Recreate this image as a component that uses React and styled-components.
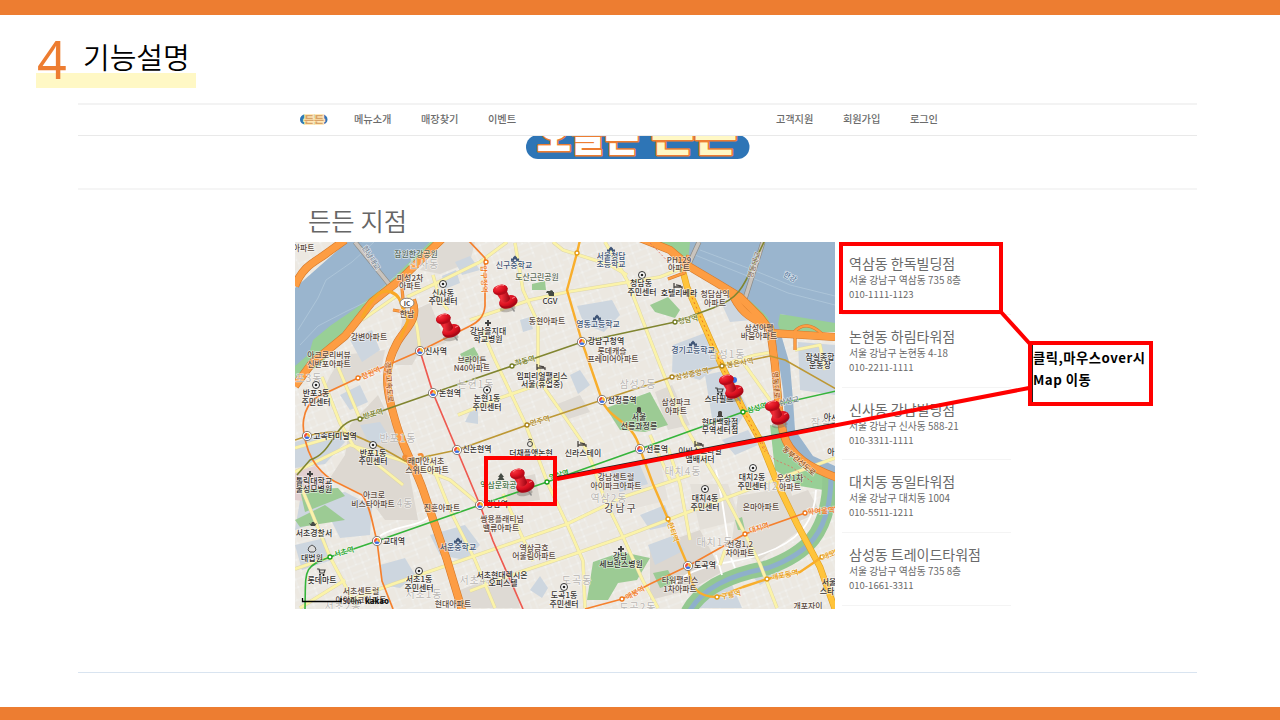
import React from "react";
import styled, { createGlobalStyle, css } from "styled-components";

const Global = createGlobalStyle`
  *, *::before, *::after { box-sizing: border-box; }
  body { margin: 0; background: #fff; }
`;

const kr = `"Noto Sans CJK KR", "Noto Sans", sans-serif`;

const Slide = styled.div`
  position: relative;
  width: 1280px;
  height: 720px;
  overflow: hidden;
  display: flex;
  flex-direction: column;
  background: #fff;
  font-family: ${kr};
`;

const Bar = styled.div`
  flex: none;
  height: ${(p) => p.$h}px;
  background: #ed7d31;
`;

const Header = styled.header`
  flex: none;
  height: 88px;
  padding: 19px 0 0 36px;
`;

const Heading = styled.h1`
  display: flex;
  width: 160px;
  height: 54px;
  margin: 0;
  font-weight: 400;
  background: linear-gradient(#fff8c5, #fff8c5) bottom / 100% 15px no-repeat;
`;

const Num = styled.span`
  width: 47px;
  padding-left: 1px;
  font: 400 52px/49px "Noto Sans", sans-serif;
  color: #ed7d31;
`;

const HeadingText = styled.span`
  font-size: 29px;
  line-height: 45px;
  font-weight: 350;
  color: #000;
  white-space: nowrap;
`;

const Site = styled.main`
  flex: 1;
  display: flex;
  flex-direction: column;
  margin: 0 83px 34px 78px;
  border-top: 2px solid #f3f3f3;
  border-bottom: 1px solid #d9e4f0;
`;

const Nav = styled.nav`
  flex: none;
  display: flex;
  align-items: center;
  height: 31px;
  padding: 0 259px 2px 222px;
  border-bottom: 1px solid #e9e9e9;
`;

const NavGroup = styled.div`
  display: flex;
  align-items: center;
  gap: 29.5px;
  margin-left: ${(p) => p.$left || 0};
`;

const NavItem = styled.a`
  font-size: 10.2px;
  line-height: 16px;
  font-weight: 500;
  color: #6b6b6b;
  white-space: nowrap;
`;

const Banner = styled.div`
  flex: none;
  height: 54px;
  padding-left: 448px;
  border-bottom: 2px solid #f5f5f5;
  svg { display: block; }
`;

const Content = styled.section`
  padding: 15px 0 0 217px;
`;

const Title = styled.h2`
  margin: 0;
  padding-left: 13px;
  height: 37px;
  font-size: 25.4px;
  line-height: 31px;
  font-weight: 350;
  color: #666;
`;

const Columns = styled.div`
  display: flex;
  gap: 7px;
`;

const MapSvg = styled.svg`
  flex: none;
  display: block;
  width: 540px;
  height: 367px;
  text {
    font-family: ${kr};
    paint-order: stroke;
    stroke-linejoin: round;
  }
`;

const List = styled.ul`
  width: 169px;
  margin: 0;
  padding: 0;
  list-style: none;
`;

const Branch = styled.li`
  height: 72.8px;
  padding: 11px 0 0 7px;
  border-bottom: 1px solid #f4f4f4;
  color: #686868;
  white-space: nowrap;
`;

const BranchName = styled.div`
  font-size: 14px;
  line-height: 20px;
  font-weight: 400;
  color: #6a6a6a;
`;

const small = css`
  font-size: 9.8px;
  line-height: 14px;
  font-weight: 400;
`;
const Address = styled.div`
  ${small}
  letter-spacing: .03px;
`;
const Phone = styled.div`
  ${small}
  font-size: 9.5px;
`;

const Marks = styled.svg`
  position: absolute;
  left: 0;
  top: 0;
`;

const Callout = styled.div`
  position: absolute;
  left: 1028px;
  top: 341px;
  width: 125px;
  height: 65px;
  padding: 2px 0 0 1px;
  border: 4px solid #ff0000;
  background: #fff;
  box-shadow: inset 1px 0 0 #222;
  font-size: 13.3px;
  line-height: 22px;
  font-weight: 700;
  letter-spacing: .5px;
  color: #000;
  white-space: nowrap;
`;

const branches = [
  ["역삼동 한독빌딩점", "서울 강남구 역삼동 735 8층", "010-1111-1123"],
  ["논현동 하림타워점", "서울 강남구 논현동 4-18", "010-2211-1111"],
  ["신사동 강남빌딩점", "서울 강남구 신사동 588-21", "010-3311-1111"],
  ["대치동 동일타워점", "서울 강남구 대치동 1004", "010-5511-1211"],
  ["삼성동 트레이드타워점", "서울 강남구 역삼동 735 8층", "010-1661-3311"],
];

/* Map data: all coordinates share the slide's pixel space. */
const DARK = "#35322f", BROWN = "#5c4a3e", NAVY = "#3f5577", FAINT = "#b9b6b3";
const OLIVE = "#737b22", GOLD = "#a98219", GREEN = "#17a01c", ORANGE = "#f07618", AMBER = "#e59a12";

const labels = [
  ["하아파트", 300, 248, BROWN], ["잠원한강공원", 416, 254, "#5b6b59"],
  ["미성2차", 410, 278, BROWN], ["아파트", 410, 286, BROWN],
  ["신사동", 443, 293, DARK], ["주민센터", 443, 301.5, DARK], ["한남", 407, 314, BROWN],
  ["강변아파트", 369, 337, BROWN], ["아크로리버뷰", 329, 355, BROWN], ["신반포아파트", 329, 364, BROWN],
  ["신사역", 436, 351, DARK], ["브라이튼", 472, 360, BROWN], ["N40아파트", 472, 368.5, BROWN],
  ["신구중학교", 514, 265, NAVY], ["도산근린공원", 537, 277, "#5b6b59"], ["CGV", 550, 301, DARK],
  ["동현아파트", 547, 321, BROWN], ["강남을지대", 488, 331, DARK], ["학교병원", 488, 339, DARK],
  ["영동고등학교", 598, 324, NAVY], ["강남구청역", 606, 341, DARK],
  ["롯데캐슬", 612, 351, BROWN], ["프레미어아파트", 613, 359.5, BROWN],
  ["서울청담", 611, 256, NAVY], ["초등학교", 611, 264, NAVY],
  ["청담동", 641, 283, DARK], ["주민센터", 642, 292, DARK],
  ["PH129", 679, 260, BROWN], ["아파트", 679, 268, BROWN], ["호텔리베라", 679, 293, DARK],
  ["청담삼익", 715, 294, BROWN], ["아파트", 715, 303, BROWN],
  ["삼성아펠", 759, 328, BROWN], ["바움아파트", 759, 336, BROWN], ["경기고등학교", 693, 350, NAVY],
  ["잠실종합", 820, 357, DARK], ["운동장", 820, 365.5, DARK],
  ["반포3동", 316, 393, DARK], ["주민센터", 316, 402, DARK], ["논현역", 450, 393, DARK],
  ["고속터미널역", 335, 436, DARK], ["반포1동", 373, 453, DARK], ["주민센터", 373, 461, DARK],
  ["래미안서초", 426, 461, BROWN], ["스위트아파트", 427, 470, BROWN],
  ["톨릭대학교", 314, 481, DARK], ["울성모병원", 314, 489, DARK], ["신논현역", 477, 449, DARK],
  ["임피리얼팰리스", 542, 376, DARK], ["서울(휴업중)", 542, 384.5, DARK],
  ["논현1동", 487, 398, DARK], ["주민센터", 487, 407, DARK],
  ["더채플앳논현", 531, 453, DARK], ["신라스테이", 583, 453, DARK], ["선정릉역", 622, 400, DARK],
  ["서울", 639, 417.5, DARK], ["선릉과정릉", 639, 426, DARK], ["선릉역", 657, 449, DARK],
  ["역삼문화공원", 502, 485, "#48764a"], ["강남센트럴", 616, 477, BROWN], ["아이파크아파트", 616, 486, BROWN],
  ["스타필드", 719, 399, DARK], ["삼성파크", 676, 402, BROWN], ["아파트", 676, 411, BROWN],
  ["현대백화점", 720, 422, DARK], ["무역센터점", 720, 430.5, DARK],
  ["이비스스타일", 700, 451, DARK], ["앰배서더", 700, 459.5, DARK],
  ["대치2동", 752, 477, DARK], ["주민센터", 752, 486, DARK],
  ["우성1차", 790, 478, BROWN], ["아파트", 790, 487, BROWN], ["아시", 831, 417, DARK], ["아", 831, 452, DARK],
  ["아크로", 374, 495.5, BROWN], ["비스타아파트", 373, 504, BROWN], ["진흥아파트", 442, 508, BROWN],
  ["서초경찰서", 314, 533, DARK], ["대법원", 312, 558, DARK], ["롯데마트", 322, 580, DARK],
  ["교대역", 394, 541, DARK], ["서운중학교", 458, 547, NAVY],
  ["서초1동", 419, 579.5, DARK], ["주민센터", 419, 588, DARK],
  ["서초센트럴", 361, 591, BROWN], ["아이파크아파트", 361, 600, BROWN], ["현대아파트", 453, 604, BROWN],
  ["쌍용플래티넘", 502, 519.5, BROWN], ["밸류아파트", 501, 528, BROWN], ["강남역", 497, 504, DARK],
  ["역삼금호", 534, 548, BROWN], ["어울림아파트", 534, 556.5, BROWN],
  ["서초현대렉시온", 502, 575, DARK], ["오피스텔", 503, 583.5, DARK],
  ["강남", 620, 556, DARK], ["세브란스병원", 621, 564.5, DARK],
  ["도곡1동", 564, 595, DARK], ["주민센터", 564, 604, DARK],
  ["대치4동", 705, 498, DARK], ["주민센터", 705, 507, DARK], ["은마아파트", 761, 507, BROWN],
  ["선경1,2", 740, 544, BROWN], ["차아파트", 740, 553.5, BROWN], ["도곡역", 705, 565, DARK],
  ["타워팰리스", 680, 580, BROWN], ["1차아파트", 680, 589, BROWN],
  ["서울", 829, 582, DARK], ["스타", 827, 591, DARK], ["개포자이", 808, 606, BROWN],
];

const turned = [
  ["압구정역", 484, 279, ORANGE, 88], ["학동역", 525, 361, OLIVE, -15], ["청담역", 688, 320, OLIVE, -10],
  ["봉은사역", 740, 363, GOLD, -10], ["한강", 790, 277, "#5b7da0", 28], ["한남대교", 371, 258, "#7b8796", 58],
  ["영동대교", 754, 265, "#8a7668", -72], ["잠원역", 371, 373, ORANGE, -24], ["반포역", 373, 414, OLIVE, -15],
  ["경부고속도로", 389, 382, "#a3561c", 86], ["언주역", 540, 421, GOLD, -15], ["역삼역", 559, 475, GREEN, -16],
  ["삼성중앙역", 692, 374, GOLD, -12], ["삼성역", 757, 408, GREEN, -14], ["삼성교", 789, 401, "#6d7a80", -12],
  ["서초역", 344, 552, GREEN, -15], ["매봉역", 635, 593, ORANGE, -28], ["대치역", 759, 528, ORANGE, -17],
  ["학여울역", 821, 511, ORANGE, -4], ["한티역", 673, 532, AMBER, 70], ["구룡역", 731, 595, AMBER, -12],
  ["개포동역", 785, 575, AMBER, -12], ["대모", 829, 555, AMBER, -20],
  ["동부간선도로", 799, 461, "#8f4b14", 40], ["영동대로", 776, 385, "#a3561c", 86],
];

const districts = [
  ["신사동", 424, 264], ["삼성1동", 727, 354], ["반포3동", 304, 378], ["반포1동", 398, 438],
  ["논현1동", 476, 384], ["삼성2동", 638, 384], ["잠실동", 826, 422], ["대치4동", 683, 471],
  ["4동", 405, 503], ["역삼2동", 609, 498], ["서초2동", 343, 606], ["서초1동", 424, 594],
  ["서초4동", 478, 580], ["도곡동", 577, 580], ["도곡2동", 638, 607], ["대치1동", 715, 542], ["대치2동", 770, 486],
];

const transfers = [[420,351],[582,342],[433,393],[307,436],[457,450],[602,400],[640,449],[480,505],[377,541],[688,566]];
const stations = [
  [486,262,ORANGE],[577,253,AMBER],[358,378,ORANGE],[360,419,OLIVE],[512,366,OLIVE],[675,322,OLIVE],
  [527,425,GOLD],[672,377,GOLD],[722,366,GOLD],[743,412,GREEN],[547,482,GREEN],[330,557,GREEN],
  [668,519,AMBER],[745,534,ORANGE],[805,513,ORANGE],[717,597,AMBER],[767,579,AMBER],[822,557,AMBER],[622,599,ORANGE],
];
const offices = [[443,284],[642,275],[316,385],[373,445],[487,390],[753,468],[419,571],[564,587],[705,489]];
const schools = [[515,257],[611,248],[597,316],[693,342],[458,539]];
const hospitals = [[488,323],[310,474],[621,549]];
const hotels = [[541,367],[582,444],[678,286],[699,444]];
const carts = [[719,391],[321,572]];
const towers = [[639,410],[720,414]];
const pins = [[448,326],[505,297],[731,387],[777,413],[522,481]];

const land = [
  ["#ded9d2", "M403 315L430 303 446 343 420 351 412 365 395 365Z"],
  ["#dedad4", "M343 355L385 350 382 366 350 382 320 398 330 376Z"],
  ["#ddd8d1", "M378 395L405 450 418 520 385 520 368 497 330 478 345 455 350 425Z"],
  ["#dedad4", "M445 242L475 242 470 262 440 274 420 270Z"],
  ["#e0dcd5", "M738 496L790 487 800 530 760 560 730 555Z"],
  ["#dcd7d0", "M650 548L700 530 722 572 690 590 650 600Z"],
  ["#ddd8d1", "M510 480L535 474 540 500 505 505Z"],
  ["#dedad4", "M655 392L672 385 690 425 668 430Z"],
  ["#dedad4", "M555 405L580 395 590 412 565 420Z"],
  ["#dedad4", "M460 590L512 570 520 608 465 608Z"],
  ["#ded9d2", "M780 500L808 490 820 512 795 523Z"],
  ["#e6e2dc", "M590 470L660 460 668 500 610 515Z"],
  ["#e4e0d9", "M690 484L728 484 740 520 700 530Z"],
];
const facilities = [
  "M577 306L612 300 620 315 604 332 584 324Z", "M520 320L530 317 533 329 523 332Z",
  "M442 276L456 270 460 283 445 289Z", "M455 262L470 256 480 270 462 275Z",
  "M295 442L335 430 345 442 325 464 295 468Z", "M340 395L360 385 368 402 350 410Z",
  "M360 425L380 422 390 438 370 446Z", "M300 500L345 492 372 506 370 535 340 538 330 518 295 530Z",
  "M295 545L325 538 332 560 302 570Z", "M380 565L405 558 415 575 400 588 382 585Z",
  "M430 535L465 525 480 545 465 560 440 555Z", "M673 345L705 333 722 362 700 380 672 372Z",
  "M705 375L728 370 748 408 735 430 712 418Z", "M722 440L748 430 758 445 735 455Z",
  "M798 342L835 345 835 395 800 390Z", "M610 470L640 465 648 484 620 492Z",
  "M640 515L665 505 672 525 650 530Z", "M570 375L580 370 590 385 578 394Z",
  "M470 412L478 410 478 424 465 422Z", "M690 588L730 580 742 608 700 608Z",
  "M648 545L675 535 685 550 655 565Z", "M720 300L740 300 752 320 730 322Z",
  "M540 576L548 588 542 598 530 590Z", "M747 570L765 560 780 572 760 585Z",
  "M350 340L372 330 380 350 362 362Z",
];
const parks = [
  "M606 408L650 392 668 425 645 432 620 430Z", "M532 284L545 281 546 290 532 290Z",
  "M650 305L668 297 680 310 675 318 655 312Z", "M593 562L622 552 650 558 637 580 618 583 608 600 587 600Z",
  "M295 520L325 505 345 520 300 527Z", "M300 490L338 488 345 496 305 512Z",
  "M735 520L742 517 745 530 738 530Z", "M460 354L474 347 480 358 466 364Z",
  "M653 573L668 570 675 583 660 588Z", "M470 350L478 354 470 360Z",
];

const localRoads = [
  "M407 297L443 280 480 262 507 242", "M470 320L530 300 567 292 660 277 690 265", "M412 307L417 327 420 350",
  "M515 243L523 290 538 323 538 365 541 383 560 410 583 443 592 463 605 500 623 537 643 581 658 608",
  "M482 330L495 360 525 423 548 484 567 524 583 561 585 608", "M553 242L563 250 610 265 627 275",
  "M605 242L627 280 660 365 683 423 717 480 745 534 760 564 777 608",
  "M433 275L440 300 448 310", "M295 472L350 445 400 460 450 480 480 505", "M322 377L340 423 353 445 403 485",
  "M338 367L360 419", "M300 484L330 557 357 608", "M295 569L330 557", "M350 600L393 584 480 554 567 524 623 497 690 475",
  "M300 608L345 580", "M470 591L520 572 580 552 623 537 683 514 750 489 835 458", "M503 494L533 561",
  "M362 320L398 295", "M295 448L350 432", "M428 455L450 510 475 560 495 608", "M670 480L650 435",
  "M740 358L770 400", "M722 365L755 355 773 352", "M795 350L820 345 825 370", "M720 565L725 550",
  "M690 540L680 484 668 448", "M458 415L500 398 560 377",
];

const highways = [
  "M295 286C303 265 317 261 327 253L345 240", "M443 238L400 280 372 302 345 336 312 363 295 386",
  "M412 300C420 320 405 328 397 343 384 367 386 386 391 405 402 449 412 460 422 487L447 560 462 610",
  "M640 238L670 250 690 267 717 283 740 297 760 317 772 333 835 337",
  "M731 291C742 318 757 319 770 328L775 365 779 410 783 432C789 457 813 469 838 478",
  "M402 288L404 311 M393 310L410 313", "M668 279L684 273 688 255",
  "M794 332C802 323 812 324 822 334", "M795 332L795 350",
];

const metro = [
  ["#f5802d", 1.7, "M468 240L485 258 485 306C484 317 478 322 470 326L420 351 358 378 317 397C300 409 302 430 306 443 312 468 330 480 340 484L362 495C370 504 373 527 377 541L382 581 393 609"],
  ["#ee5a50", 1.7, "M420 351L433 393 457 450 480 505 493 541 523 609"],
  ["#f8ae2c", 2.4, "M580 240L577 253 567 290 582 342 602 400C609 420 633 420 640 449L653 484 668 519 688 566C691 590 699 597 717 597L743 587 767 579 800 572 822 557 836 550"],
  ["#808530", 1.6, "M297 475L310 460C335 452 333 420 360 419L390 408 433 393 512 366 582 342 675 322 713 308C745 297 745 280 765 240"],
  ["#bd9834", 1.6, "M295 440L307 436C350 425 360 440 373 443L405 461 457 450 527 425 602 400 672 377 722 366 770 356 785 360 836 389"],
  ["#35b43a", 1.6, "M305 609C306 570 302 567 330 557L377 541 480 505 547 482 640 449 743 412 836 391"],
  ["#f5802d", 1.6, "M585 609L622 599 650 584 688 566 745 534 805 513 836 507"],
];

const River = "M347 242L430 242 393 278C368 302 338 320 330 326L313 340 309 354 295 366 295 288Z";
const EastRiver = "M690 242L835 242 835 323 780 314 778 324 790 365 793 400 795 430 813 456 835 466 835 476 805 466 788 446 785 420 783 390 777 350 768 318C755 302 735 290 717 279L688 262Z";

function Pin({ x, y }) {
  return (
    <g transform={`translate(${x} ${y})`}>
      <ellipse cx="1" cy="12" rx="8" ry="3.4" fill="#69605a" opacity=".38" transform="rotate(-8)" />
      <path d="M5 8L9.5 14.5" stroke="#8f8f8f" strokeWidth="1.4" />
      <ellipse cx="3.5" cy="5.3" rx="9.4" ry="6" fill="#a90716" transform="rotate(-18 3.5 5.5)" />
      <ellipse cx="3" cy="3.8" rx="9" ry="5.2" fill="url(#pinRed)" transform="rotate(-18 3 3.8)" />
      <path d="M-9.5 -5L-3.5 4.5C-.5 7 5 4.5 5 1L1-8Z" fill="url(#pinNeck)" />
      <ellipse cx="-4.6" cy="-7" rx="7.5" ry="5" fill="#b50b19" transform="rotate(-14 -4.6 -7)" />
      <ellipse cx="-4.8" cy="-8" rx="7.2" ry="4.2" fill="url(#pinRed)" transform="rotate(-14 -4.8 -8)" />
      <path d="M-9-9C-7-12-3-12.5-1-11.5" stroke="#ff8d90" strokeWidth="1.1" fill="none" opacity=".8" />
      <path d="M7 1.5L10 0" stroke="#ff9a9c" strokeWidth="1.2" opacity=".7" />
    </g>
  );
}

function StoreMap() {
  return (
    <MapSvg viewBox="295 242 540 367" aria-label="지점 지도">
      <defs>
        <pattern id="streets" width="54" height="48" patternUnits="userSpaceOnUse" patternTransform="rotate(-21)">
          <path d="M0 5H54M0 13H22M22 17H54M0 23H36M0 31H54M16 38H54M0 43H30M6 0V23M14 5V48M22 0V31M29 17V48M36 0V31M43 5V17M43 31V48M50 0V38M8 31V43" stroke="#dcd8d2" strokeWidth="1.5" fill="none" opacity=".8" />
          <path d="M0 5H54M0 13H22M22 17H54M0 23H36M0 31H54M16 38H54M0 43H30M6 0V23M14 5V48M22 0V31M29 17V48M36 0V31M43 5V17M43 31V48M50 0V38M8 31V43" stroke="#fbfaf8" strokeWidth=".9" fill="none" />
        </pattern>
        <radialGradient id="pinRed" cx=".35" cy=".3" r=".8">
          <stop offset="0" stopColor="#f4333d" /><stop offset=".6" stopColor="#db1020" /><stop offset="1" stopColor="#b00716" />
        </radialGradient>
        <linearGradient id="pinNeck">
          <stop offset="0" stopColor="#c40d1b" /><stop offset=".4" stopColor="#ef2d38" /><stop offset="1" stopColor="#9c0412" />
        </linearGradient>
      </defs>
      <rect x="295" y="242" width="540" height="367" fill="#ece8e1" />
      <rect x="295" y="242" width="540" height="367" fill="url(#streets)" />
      {land.map(([c, d]) => <path key={d} d={d} fill={c} />)}
      {facilities.map((d) => <path key={d} d={d} fill="#cdd6df" />)}
      <path d="M295 472L315 466 330 482 318 503 295 500Z" fill="#e2cfd0" />
      {parks.map((d) => <path key={d} d={d} fill="#9ccb94" />)}
      <path d="M430 242H442L375 303 320 365 295 380V360L330 315Z" fill="#98cf96" />
      <path d={River} fill="#9ab5ce" />
      <path d="M362 242L374 242 352 262 326 280 318 298 298 330M422 262L393 278 370 300 345 312 318 326 300 345" stroke="#b5cbdd" strokeWidth=".7" fill="none" />
      <path d="M779 314L835 318 835 332 773 333ZM766 300L778 314 776 330 745 300ZM650 242L692 242 688 262 655 246ZM770 425L790 430C797 465 822 466 835 476V492L800 486 775 470Z" fill="#98cf96" />
      <path d={EastRiver} fill="#9ab5ce" />
      <path d="M700 250L748 268 790 285 835 296M695 255L745 275 788 293 835 305" stroke="#b5cbdd" strokeWidth=".7" fill="none" />
      <path d="M830 475C830 535 805 554 767 568 727 575 700 590 688 612" stroke="#93c891" strokeWidth="15" fill="none" />
      <path d="M831 475C831 535 806 554 768 568 728 575 701 590 689 612" stroke="#8eb0cb" strokeWidth="5" fill="none" />
      <path d="M673 585C700 560 735 565 765 553 795 542 815 525 816 490M716 470L722 500 730 555 735 568M380 536C400 522 430 530 435 505M722 575L716 555" stroke="#fff" strokeWidth="1.8" fill="none" />
      {localRoads.map((d) => <path key={d} d={d} stroke="#ddd5ac" strokeWidth="3.6" fill="none" strokeLinejoin="round" />)}
      {localRoads.map((d) => <path key={d} d={d} stroke="#fbf3a9" strokeWidth="2.7" fill="none" strokeLinejoin="round" />)}
      <path d="M355 242L389 284M699 242L688 266M763 242L744 302" stroke="#8c8c88" strokeWidth="5" />
      <path d="M355 242L389 284M699 242L688 266M763 242L744 302" stroke="#c9c3bd" strokeWidth="3.6" />
      <path d="M682 268L687 287 703 323 722 366 745 413 760 440 778 485 797 524 820 567 836 612" stroke="#dfa024" strokeWidth="6.6" fill="none" />
      <path d="M682 268L687 287 703 323 722 366 745 413 760 440 778 485 797 524 820 567 836 612" stroke="#ffc43b" strokeWidth="5.4" fill="none" />
      <path d="M690 293L722 366 745 413 765 452" stroke="#e77924" strokeWidth="1" strokeDasharray="2 3" fill="none" />
      {highways.map((d, i) => <path key={d} d={d} stroke="#d4792b" strokeWidth={i > 4 ? 3.2 : 8.2} fill="none" />)}
      {highways.map((d, i) => <path key={d} d={d} stroke="#fd9d43" strokeWidth={i > 4 ? 2.2 : 7} fill="none" />)}
      <path d="M362 318C374 294 381 289 391 292 404 297 400 309 408 320L400 340" stroke="#f9a826" strokeWidth="3" fill="none" />
      <path d="M407 457c-5-4-5 3 1 5m10-7c6-3 6 3 1 6" stroke="#f28d35" strokeWidth="2.4" fill="none" />
      <path d="M762 442C770 463 782 461 793 468L812 482M650 243C660 253 668 262 674 267" stroke="#e36b5e" strokeWidth=".8" strokeDasharray="2 2" fill="none" />
      {metro.map(([c, w, d]) => <path key={d} d={d} stroke={c} strokeWidth={w} fill="none" strokeLinejoin="round" />)}

      {districts.map(([t, x, y]) => (
        <text key={t + x} x={x} y={y + 3.5} textAnchor="middle" fontSize="10" letterSpacing="1" fill={FAINT} stroke="#fff" strokeWidth="1.2" strokeOpacity=".7">{t}</text>
      ))}
      {stations.map(([x, y, c]) => <circle key={x} cx={x} cy={y} r="2" fill="#fff" stroke={c} strokeWidth="1.3" />)}
      {transfers.map(([x, y]) => (
        <g key={x} fill="none" strokeWidth="2.3">
          <circle cx={x} cy={y} r="4.6" fill="#fff" stroke="#77716c" strokeWidth=".9" />
          <path d={`M${x - 1.6} ${y + 0.9}A1.8 1.8 0 0 1 ${x} ${y - 1.8}`} stroke="#ef4938" />
          <path d={`M${x} ${y - 1.8}A1.8 1.8 0 0 1 ${x + 1.6} ${y + 0.9}`} stroke="#f4b52f" />
          <path d={`M${x + 1.6} ${y + 0.9}A1.8 1.8 0 0 1 ${x - 1.6} ${y + 0.9}`} stroke="#3d6fdf" />
        </g>
      ))}
      {offices.map(([x, y]) => (
        <g key={x}><circle cx={x} cy={y} r="3.5" fill="#fff" stroke="#333" strokeWidth="1" /><circle cx={x} cy={y} r="1.3" fill="#222" /></g>
      ))}
      {schools.map(([x, y]) => <path key={x} d={`M${x} ${y - 3.5}v2l2 2v1h2v3h-3v-2h-2v2h-3v-3h2v-1l2-2`} fill={NAVY} />)}
      {hospitals.map(([x, y]) => <path key={x} d={`M${x - 3} ${y}h6M${x} ${y - 3}v6`} stroke="#444" strokeWidth="2" />)}
      {hotels.map(([x, y]) => <path key={x} d={`M${x - 4} ${y - 3}v6M${x - 4} ${y + 1}h8v2M${x - 2} ${y - 1.2}l5 1`} stroke="#4a4542" strokeWidth="1.3" fill="none" />)}
      {carts.map(([x, y]) => (
        <g key={x}><path d={`M${x - 4} ${y - 3}h2l1 4h4l1-3h-5.5`} stroke="#444" strokeWidth="1.2" fill="none" /><circle cx={x - 1} cy={y + 3} r="1" /><circle cx={x + 2.5} cy={y + 3} r="1" /></g>
      ))}
      {towers.map(([x, y]) => <path key={x} d={`M${x - 3} ${y + 3}h6v-1h-1v-4l-1-1h-2l-1 1v4h-1z`} fill="#4a4542" />)}
      <path d="M547 291h3l1-1 2 1v1h1v4h-5l-1-3h-2zM309 523l2 1 1-2 2 0 1 2 2-1-2 3h-4zM501 473l3 4h-1.5l2 3h-7l2-3h-1.5z" fill="#454b44" />
      <circle cx="530" cy="444" r="2.5" fill="none" stroke="#444" /><path d="M528 440l2-1 2 1" stroke="#444" fill="none" />
      <path d="M312 545l3 2 1 3-2 2h-4l-2-2 1-3z" fill="#ddd" stroke="#555" />
      <circle cx="734" cy="380" r="3" fill="#3973e5" />
      <ellipse cx="407" cy="303" rx="7" ry="4.8" fill="#fff" stroke="#8b847d" />
      <text x="407" y="305.5" textAnchor="middle" fontSize="6.5" fontWeight="700" fill="#444">IC</text>

      {turned.map(([t, x, y, c, a]) => (
        <text key={t} transform={`translate(${x} ${y}) rotate(${a})`} y="2.5" textAnchor="middle" fontSize="7.4" fontWeight="500" fill={c} stroke="#fff" strokeWidth="1.3" strokeOpacity=".65">{t}</text>
      ))}
      {labels.map(([t, x, y, c]) => (
        <text key={t + x + y} x={x} y={y + 2.9} textAnchor="middle" fontSize="7.9" fontWeight="500" fill={c} stroke="#fff" strokeWidth="1.4" strokeOpacity=".6">{t}</text>
      ))}
      <text x="621" y="511.5" textAnchor="middle" fontSize="10" letterSpacing="2" fontWeight="500" fill="#5f554f" stroke="#fff" strokeWidth="1.2">강남구</text>
      <path d="M302.5 598v3.5H341v-3.5" stroke="#000" strokeWidth="1.3" fill="none" />
      <text x="352" y="604" textAnchor="middle" fontSize="7" fontWeight="500" fill="#222">500m</text>
      <text x="377" y="604" textAnchor="middle" fontSize="7.8" fontWeight="900" fill="#111">kakao</text>
      {pins.map(([x, y]) => <Pin key={x} x={x} y={y} />)}
    </MapSvg>
  );
}

function SmallLogo() {
  return (
    <svg width="28" height="12" viewBox="0 0 28 12">
      <rect x="0" y="1.5" width="27.5" height="10" rx="5" fill="#2e75b6" />
      <text x="4" y="9.7" fontSize="9" fontWeight="900" textLength="20" lengthAdjust="spacingAndGlyphs" fill="#d9a469" stroke="#ffe9b8" strokeWidth="2.2" style={{ paintOrder: "stroke" }}>든든</text>
    </svg>
  );
}

function BannerLogo() {
  return (
    <svg width="224" height="24" viewBox="0 0 224 24" fontSize="42" fontWeight="900" stroke="#ed7d31" strokeWidth="3" strokeLinejoin="round">
      <rect x="0" y="-1" width="223.5" height="24" rx="12" fill="#2e75b6" stroke="none" />
      <text x="11" y="14.5" textLength="102" lengthAdjust="spacingAndGlyphs" fill="#fff" style={{ paintOrder: "stroke" }}>오늘은</text>
      <text x="125" y="14.5" textLength="86" lengthAdjust="spacingAndGlyphs" fill="#fff8c5" style={{ paintOrder: "stroke" }}>든든</text>
    </svg>
  );
}

export default function App() {
  return (
    <Slide>
      <Global />
      <Bar $h={15} />
      <Header>
        <Heading><Num>4</Num><HeadingText>기능설명</HeadingText></Heading>
      </Header>
      <Site>
        <Nav>
          <SmallLogo />
          <NavGroup $left="26px">
            <NavItem>메뉴소개</NavItem><NavItem>매장찾기</NavItem><NavItem>이벤트</NavItem>
          </NavGroup>
          <NavGroup $left="auto">
            <NavItem>고객지원</NavItem><NavItem>회원가입</NavItem><NavItem>로그인</NavItem>
          </NavGroup>
        </Nav>
        <Banner><BannerLogo /></Banner>
        <Content>
          <Title>든든 지점</Title>
          <Columns>
            <StoreMap />
            <List>
              {branches.map(([name, address, phone]) => (
                <Branch key={name}>
                  <BranchName>{name}</BranchName>
                  <Address>{address}</Address>
                  <Phone>{phone}</Phone>
                </Branch>
              ))}
            </List>
          </Columns>
        </Content>
      </Site>
      <Bar $h={13} />
      <Marks width="1280" height="720" fill="none" stroke="#ff0000" strokeWidth="4">
        <path d="M557 477.7L835 424.2" stroke="#222" strokeWidth="3" />
        <path d="M557 479L1029 388M1001 312L1030 344" />
        <rect x="841" y="244" width="160" height="68" />
        <rect x="486" y="458" width="69" height="46" />
      </Marks>
      <Callout>클릭,마우스over시<br />Map 이동</Callout>
    </Slide>
  );
}
